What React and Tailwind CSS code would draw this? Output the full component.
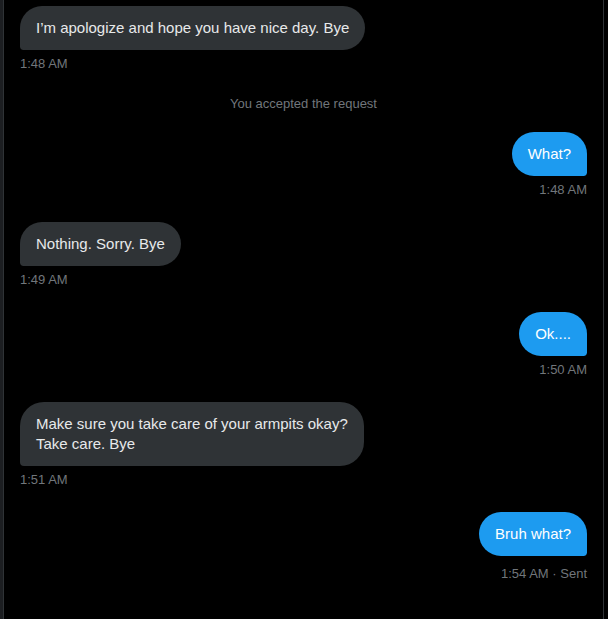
import React from "react";

const messages = [
    { type: "in", text: "I’m apologize and hope you have nice day. Bye", time: "1:48 AM" },
    { type: "note", text: "You accepted the request" },
    { type: "out", text: "What?", time: "1:48 AM" },
    { type: "in", text: "Nothing. Sorry. Bye", time: "1:49 AM" },
    { type: "out", text: "Ok....", time: "1:50 AM" },
    { type: "in", text: ["Make sure you take care of your armpits okay?", "Take care. Bye"], time: "1:51 AM" },
    { type: "out", text: "Bruh what?", time: "1:54 AM", sent: true },
];

const Bubble = ({ msg }) => {
    const lines = Array.isArray(msg.text) ? msg.text : [msg.text];
    const isOut = msg.type === "out";
    return (
        <div className={`flex flex-col pb-6 ${isOut ? "items-end" : "items-start"}`}>
            <div
                className={`px-4 py-3 text-[15px] leading-5 ${isOut
                        ? "bg-[#1d9bf0] text-white rounded-3xl rounded-br-[4px]"
                        : "bg-[#2f3336] text-[#e7e9ea] rounded-3xl rounded-bl-[4px]"
                    }`}
            >
                {lines.map((l, i) => (
                    <div key={i}>{l}</div>
                ))}
            </div>
            <div className={`${msg.sent ? "mt-[10px]" : "mt-[6px]"} text-[13px] leading-4 text-[#71767b]`}>
                {msg.time}
                {msg.sent && <span> · Sent</span>}
            </div>
        </div>
    );
};

export default function App() {
    return (
        <div
            className="flex h-[619px] w-[608px] overflow-hidden bg-black"
            style={{ fontFamily: '"Liberation Sans", Arial, sans-serif' }}
        >
            <div className="w-[3px] shrink-0 bg-[#1c1e21]" />
            <div className="flex w-[601px] shrink-0 flex-col border-x border-[#2f3336] px-4 pt-[6px]">
                {messages.map((m, i) =>
                    m.type === "note" ? (
                        <div key={i} className="mb-5 text-center text-[13px] leading-4 text-[#71767b]">
                            {m.text}
                        </div>
                    ) : (
                        <Bubble key={i} msg={m} />
                    )
                )}
            </div>
        </div>
    );
}
